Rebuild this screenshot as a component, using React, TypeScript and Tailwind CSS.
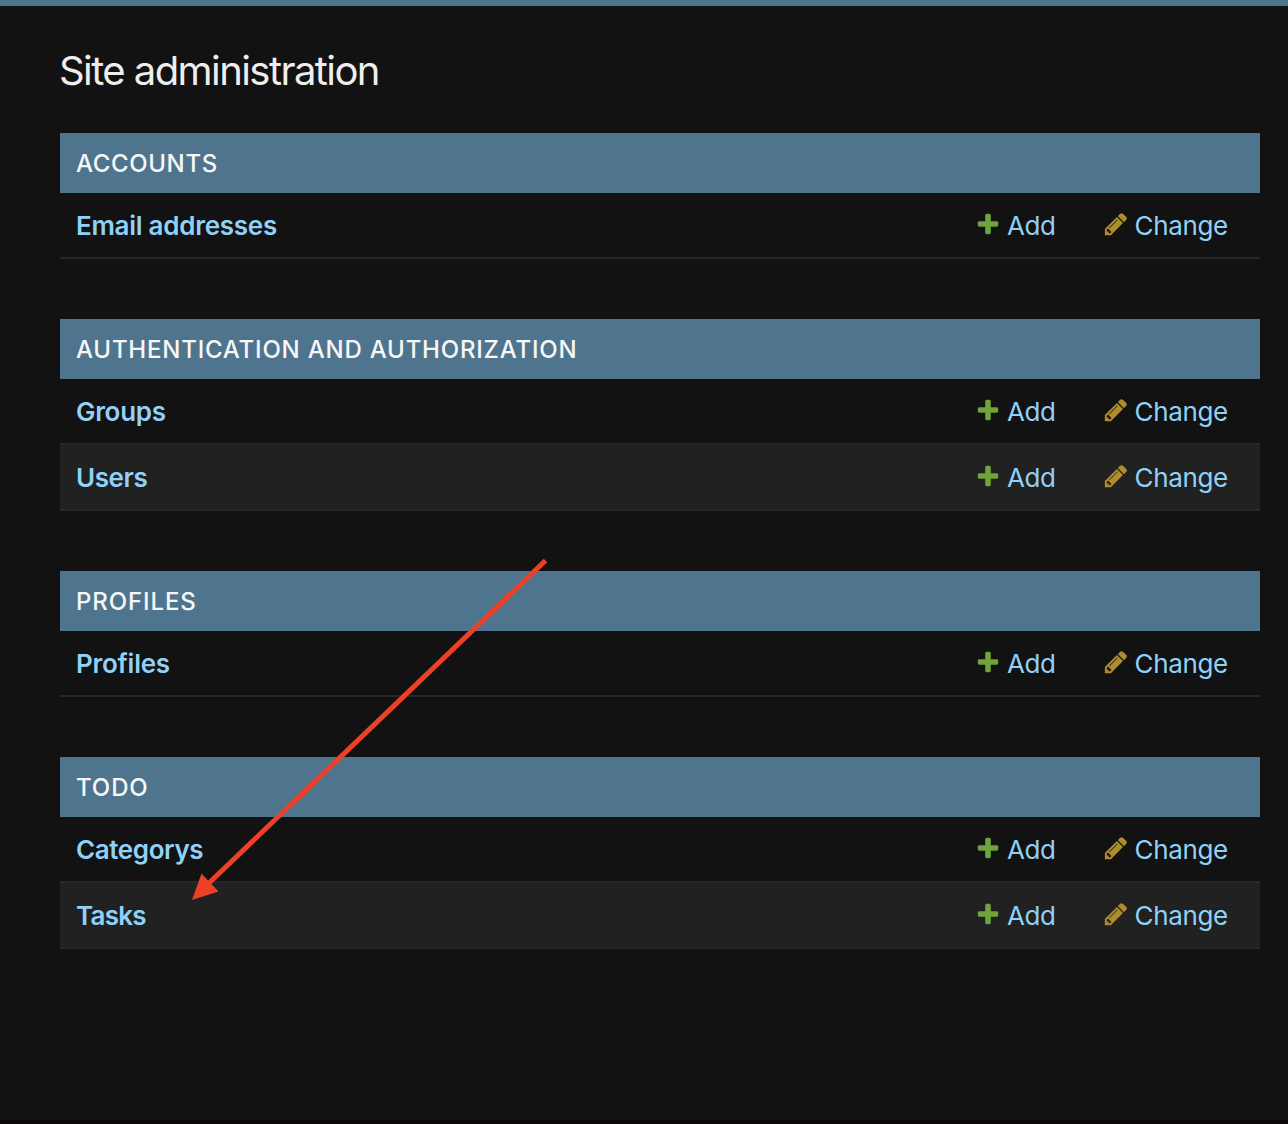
type Section = { title: string; tracking: string; models: { name: string; tracking: string }[] };

const sections: Section[] = [
  { title: "Accounts", tracking: "tracking-[0.62px]", models: [{ name: "Email addresses", tracking: "tracking-[-0.27px]" }] },
  {
    title: "Authentication and Authorization",
    tracking: "tracking-[0.79px]",
    models: [
      { name: "Groups", tracking: "tracking-[-0.3px]" },
      { name: "Users", tracking: "tracking-[-0.4px]" },
    ],
  },
  { title: "Profiles", tracking: "tracking-[0.88px]", models: [{ name: "Profiles", tracking: "tracking-[-0.25px]" }] },
  {
    title: "Todo",
    tracking: "tracking-[0.9px]",
    models: [
      { name: "Categorys", tracking: "tracking-[-0.4px]" },
      { name: "Tasks", tracking: "tracking-[-0.75px]" },
    ],
  },
];

function PlusIcon() {
  return (
    <svg className="mb-1 size-[26px] shrink-0" viewBox="0 0 1792 1792" fill="#6fa33b" aria-hidden="true">
      <path d="M1600 796v192q0 40-28 68t-68 28h-416v416q0 40-28 68t-68 28h-192q-40 0-68-28t-28-68v-416h-416q-40 0-68-28t-28-68v-192q0-40 28-68t68-28h416v-416q0-40 28-68t68-28h192q40 0 68 28t28 68v416h416q40 0 68 28t28 68z" />
    </svg>
  );
}

function PencilIcon() {
  return (
    <svg className="mb-1 size-[26px] shrink-0" viewBox="0 0 1792 1792" fill="#b08c2b" aria-hidden="true">
      <path d="M491 1536l91-91-235-235-91 91v107h128v128h107zm523-928q0-22-22-22-10 0-17 7l-542 542q-7 7-7 17 0 22 22 22 10 0 17-7l542-542q7-7 7-17zm-54-192l416 416-832 832h-416v-416zm683 96q0 53-37 90l-166 166-416-416 166-165q36-38 90-38 53 0 91 38l235 234q37 39 37 91z" />
    </svg>
  );
}

function ModelRow({ name, tracking, shaded }: { name: string; tracking: string; shaded: boolean }) {
  return (
    <li className={`flex h-[66px] items-center border-b-2 border-[#272727] pt-[2px] pl-4 text-[26px] leading-8 text-[#91d1f7] ${shaded ? "bg-[#212121]" : "bg-[#121212]"}`}>
      <a className={`flex-1 font-semibold ${tracking}`}>{name}</a>
      <a className="flex w-[127.5px] items-center gap-[6px] tracking-[-0.4px]">
        <PlusIcon />
        <span className="font-[430]">Add</span>
      </a>
      <a className="flex w-[157.5px] items-center gap-[6px] tracking-[-0.35px]">
        <PencilIcon />
        <span className="font-[430]">Change</span>
      </a>
    </li>
  );
}

function Arrow() {
  return (
    <svg className="pointer-events-none absolute top-[550px] left-[180px] h-[360px] w-[380px]" viewBox="180 550 380 360" aria-hidden="true">
      <path d="M545.5 560.5L208 884" stroke="#ed4127" strokeWidth="5" fill="none" />
      <path d="M192 900L201.5 873.5L218.5 891.5Z" fill="#ed4127" />
    </svg>
  );
}

export default function App() {
  return (
    <div className="relative flex h-[1124px] w-[1288px] flex-col overflow-hidden border-t-6 border-b-4 border-t-[#4f748d] border-b-[#0b060a] bg-[#121212] font-['Inter',sans-serif]">
      <main className="pt-[40px] pr-7 pl-[59px]">
        <h1 className="mb-[37px] h-[50px] text-[40px] leading-[50px] font-[370] tracking-[-1.57px] whitespace-nowrap text-[#eeeeee]">
          <span>Site administration</span>
        </h1>
        <div className="ml-px flex flex-col gap-[60px]">
          {sections.map((s) => (
            <section key={s.title}>
              <h2 className="flex h-[60px] items-center bg-[#4f748d] pt-[2px] pl-4 text-[24px] leading-8 font-[450] text-[#f7f7f7] uppercase">
                <span className={s.tracking}>{s.title}</span>
              </h2>
              <ul>
                {s.models.map((m, i) => (
                  <ModelRow key={m.name} name={m.name} tracking={m.tracking} shaded={i % 2 === 1} />
                ))}
              </ul>
            </section>
          ))}
        </div>
      </main>
      <div className="absolute -top-[6px] left-0">
        <Arrow />
      </div>
    </div>
  );
}
